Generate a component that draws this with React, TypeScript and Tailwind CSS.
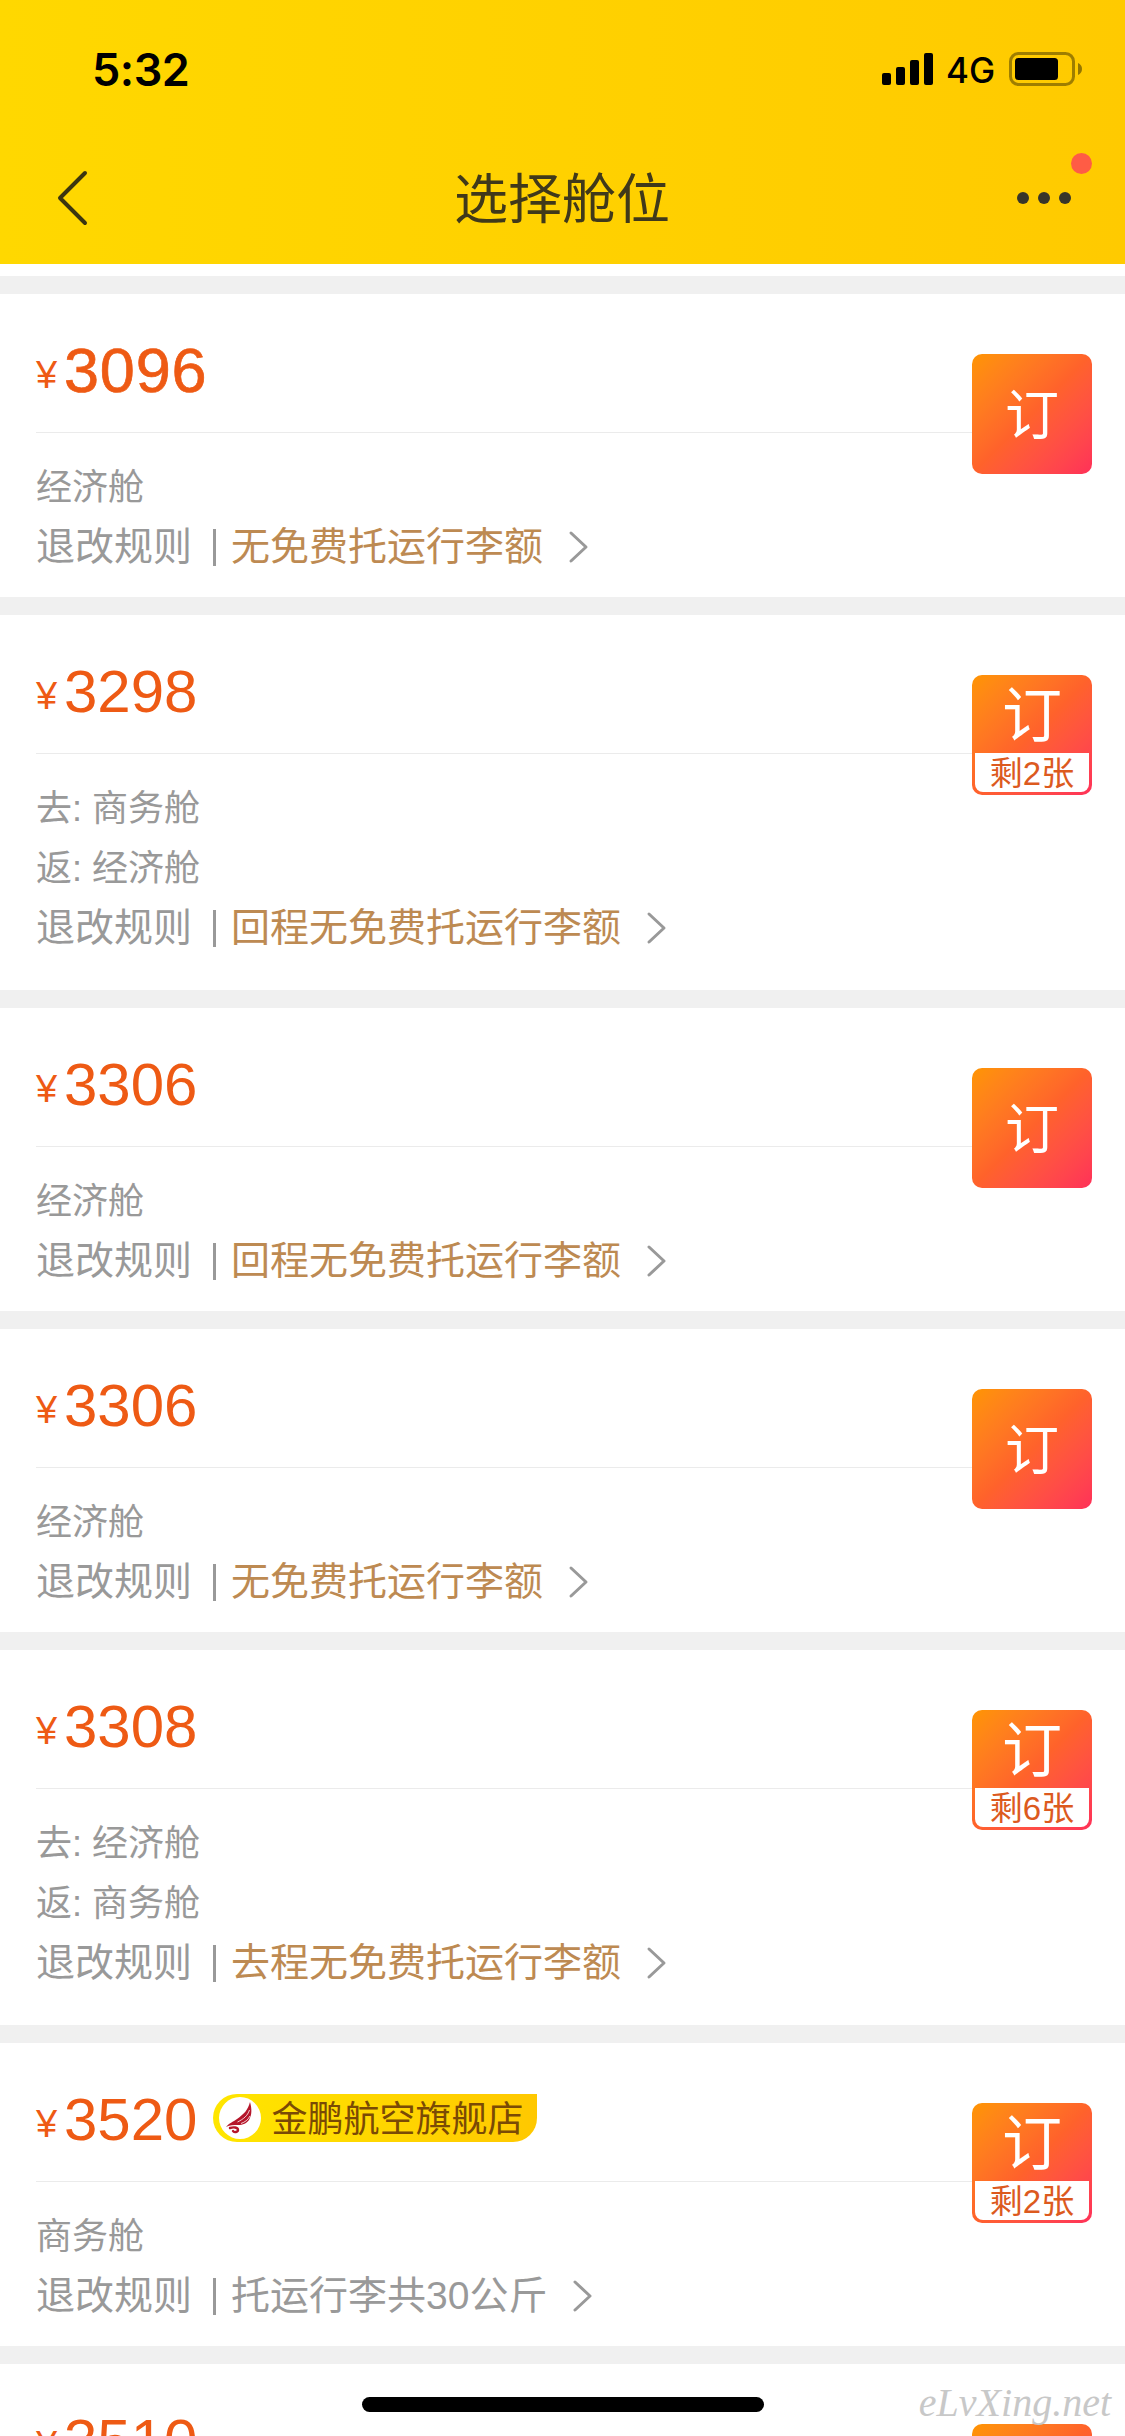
import clsx from "clsx";

type Fare = {
  price: string;
  cabins: string[];
  baggage: string;
  muted?: boolean;
  bold?: boolean;
  left?: number;
  shop?: string;
};

const fares: Fare[] = [
  { price: "3096", cabins: ["经济舱"], baggage: "无免费托运行李额", bold: true },
  { price: "3298", cabins: ["去: 商务舱", "返: 经济舱"], baggage: "回程无免费托运行李额", left: 2 },
  { price: "3306", cabins: ["经济舱"], baggage: "回程无免费托运行李额" },
  { price: "3306", cabins: ["经济舱"], baggage: "无免费托运行李额" },
  { price: "3308", cabins: ["去: 经济舱", "返: 商务舱"], baggage: "去程无免费托运行李额", left: 6 },
  { price: "3520", cabins: ["商务舱"], baggage: "托运行李共30公斤", muted: true, left: 2, shop: "金鹏航空旗舰店" },
  { price: "3510", cabins: ["经济舱"], baggage: "无免费托运行李额" },
];

function StatusBar() {
  return (
    <div className="flex h-[132px] items-start justify-between pt-[52px] pr-[43px] pl-[92px]">
      <span className="font-[Inter,sans-serif] text-[45px] leading-[35px] font-semibold tracking-[-0.5px] text-black">5:32</span>
      <div className="flex h-[34px] items-center">
        <svg width="51" height="34" viewBox="0 0 51 34" fill="#000">
          <rect x="0" y="21" width="9" height="12" rx="2" />
          <rect x="14" y="15" width="9" height="18" rx="2" />
          <rect x="28" y="8" width="9" height="25" rx="2" />
          <rect x="42" y="1" width="9" height="32" rx="2" />
        </svg>
        <span className="ml-[13px] w-[63px] pt-[2px] font-[Inter,sans-serif] text-[35px] leading-[34px] font-medium text-black">4G</span>
        <svg width="73" height="34" viewBox="0 0 73 34">
          <rect x="1.5" y="1.5" width="63" height="31" rx="8" fill="none" stroke="#000" strokeOpacity="0.38" strokeWidth="3" />
          <rect x="6" y="6" width="43" height="22" rx="3.5" fill="#000" />
          <path d="M69 11c2.600 1 4 3.400 4 6s-1.400 5-4 6z" fill="#000" fillOpacity="0.42" />
        </svg>
      </div>
    </div>
  );
}

function NavBar() {
  return (
    <div className="flex h-[132px] items-center justify-between pr-[54px] pl-[57px]">
      <svg width="96" height="56" viewBox="0 0 96 56" fill="none" stroke="#3b3510" strokeWidth="4" strokeLinecap="round" strokeLinejoin="round">
        <path d="M28 3 3 28l25 25" />
      </svg>
      <h1 className="pt-[3px] text-[54px] leading-[60px] text-[#40391a]">选择舱位</h1>
      <div className="relative flex w-[100px] justify-end gap-[9px]">
        <i className="size-3 rounded-full bg-[#38352a]" />
        <i className="size-3 rounded-full bg-[#38352a]" />
        <i className="size-3 rounded-full bg-[#38352a]" />
        <i className="absolute -top-[39px] -right-[21px] size-[21px] rounded-full bg-[#ff5c45]" />
      </div>
    </div>
  );
}

function ShopBadge({ name }: { name: string }) {
  return (
    <div className="-mt-[2px] ml-[16px] flex h-12 w-[324px] items-center rounded-l-[24px] rounded-br-[24px] bg-linear-to-r from-[#ffe600] to-[#ffc800] pl-[6px]">
      <svg width="42" height="42" viewBox="0 0 42 42">
        <circle cx="21" cy="21" r="21" fill="#fff" />
        <path d="M31 5c2 7 2 13-1 18-2 3-6 5-11 5-4 0-8 0-12 2 3-4 7-5 11-8 7-5 11-9 13-17z" fill="#b5162b" />
        <path d="M30.500 13c-2 6-6 9-12 12M31 19c-2 4-5 6-9 7.500" fill="none" stroke="#fff" strokeWidth=".8" />
        <path d="M11 31c3-1 8-1 8 2 0 2-4 3-5 1" fill="none" stroke="#b5162b" strokeWidth="2.4" strokeLinecap="round" />
      </svg>
      <span className="ml-[10px] pt-[3px] text-[36px] leading-[45px] whitespace-nowrap text-[#7a4a05]">{name}</span>
    </div>
  );
}

function BookButton({ left }: { left?: number }) {
  return (
    <button className="absolute top-[60px] right-[33px] flex size-[120px] flex-col rounded-[10px] bg-linear-to-br from-[#ff9500] via-[#ff622b] to-[#ff3058] p-[3px] text-white">
      <span className={clsx("flex w-full flex-1 items-center justify-center", left ? "pt-[2px] text-[60px] leading-[70px]" : "pt-[3px] text-[54px] leading-[60px]")}>
        订
      </span>
      {left && (
        <span className="h-[39px] w-full rounded-b-[8px] bg-white pt-px text-center text-[33px] leading-[39px] text-[#dc5a1e]">
          剩{left}张
        </span>
      )}
    </button>
  );
}

function FareCard({ fare }: { fare: Fare }) {
  return (
    <li className={clsx("relative shrink-0 bg-white pl-[36px]", fare.cabins.length > 1 ? "h-[375px]" : "h-[303px]")}>
      <div className="mr-[153px] flex h-[139px] items-center border-b border-[#ebebeb] pt-[14px]">
        <span className="w-[28px] pt-[9px] text-[38px] leading-[60px] text-[#ee5a14]">¥</span>
        <span className={clsx("text-[#ee5a14]", fare.bold ? "text-[63px] leading-[60px] tracking-[0.8px] [-webkit-text-stroke:0.7px_#ee5a14]" : "pt-[2px] text-[60px] leading-[60px]")}>
          {fare.price}
        </span>
        {fare.shop && <ShopBadge name={fare.shop} />}
      </div>
      <div className="pt-[25px] text-[#999]">
        {fare.cabins.map((cabin) => (
          <p key={cabin} className="text-[36px] leading-[60px]">{cabin}</p>
        ))}
        <p className="-mt-px flex h-[60px] items-center text-[39px] leading-[60px]">
          退改规则
          <i className="mr-[15px] ml-[21px] h-[37px] w-[3px] bg-[#999]" />
          <span className={fare.muted ? "text-[#999]" : "text-[#bd8a52]"}>{fare.baggage}</span>
          <svg className="ml-[25px]" width="22" height="34" viewBox="0 0 22 34" fill="none" stroke="#999" strokeWidth="3" strokeLinecap="round" strokeLinejoin="round">
            <path d="m3 3 15 14L3 31" />
          </svg>
        </p>
      </div>
      <BookButton left={fare.left} />
    </li>
  );
}

export default function App() {
  return (
    <div className="relative flex h-[2436px] w-[1125px] flex-col overflow-hidden bg-white font-['Liberation_Sans','Noto_Sans_CJK_SC',sans-serif]">
      <header className="h-[264px] shrink-0 bg-linear-to-r from-[#ffd800] to-[#ffca00]">
        <StatusBar />
        <NavBar />
      </header>
      <ul className="mt-3 flex flex-col gap-[18px] bg-[#f0f0f0] pt-[18px]">
        {fares.map((fare, i) => (
          <FareCard key={i} fare={fare} />
        ))}
      </ul>
      <div className="absolute bottom-6 left-[362px] h-[15px] w-[402px] rounded-full bg-black" />
      <span className="absolute right-[14px] bottom-[9px] font-['Liberation_Serif',cursive] text-[40px] leading-[48px] text-[#c8c8c8] italic">
        eLvXing.net
      </span>
    </div>
  );
}
